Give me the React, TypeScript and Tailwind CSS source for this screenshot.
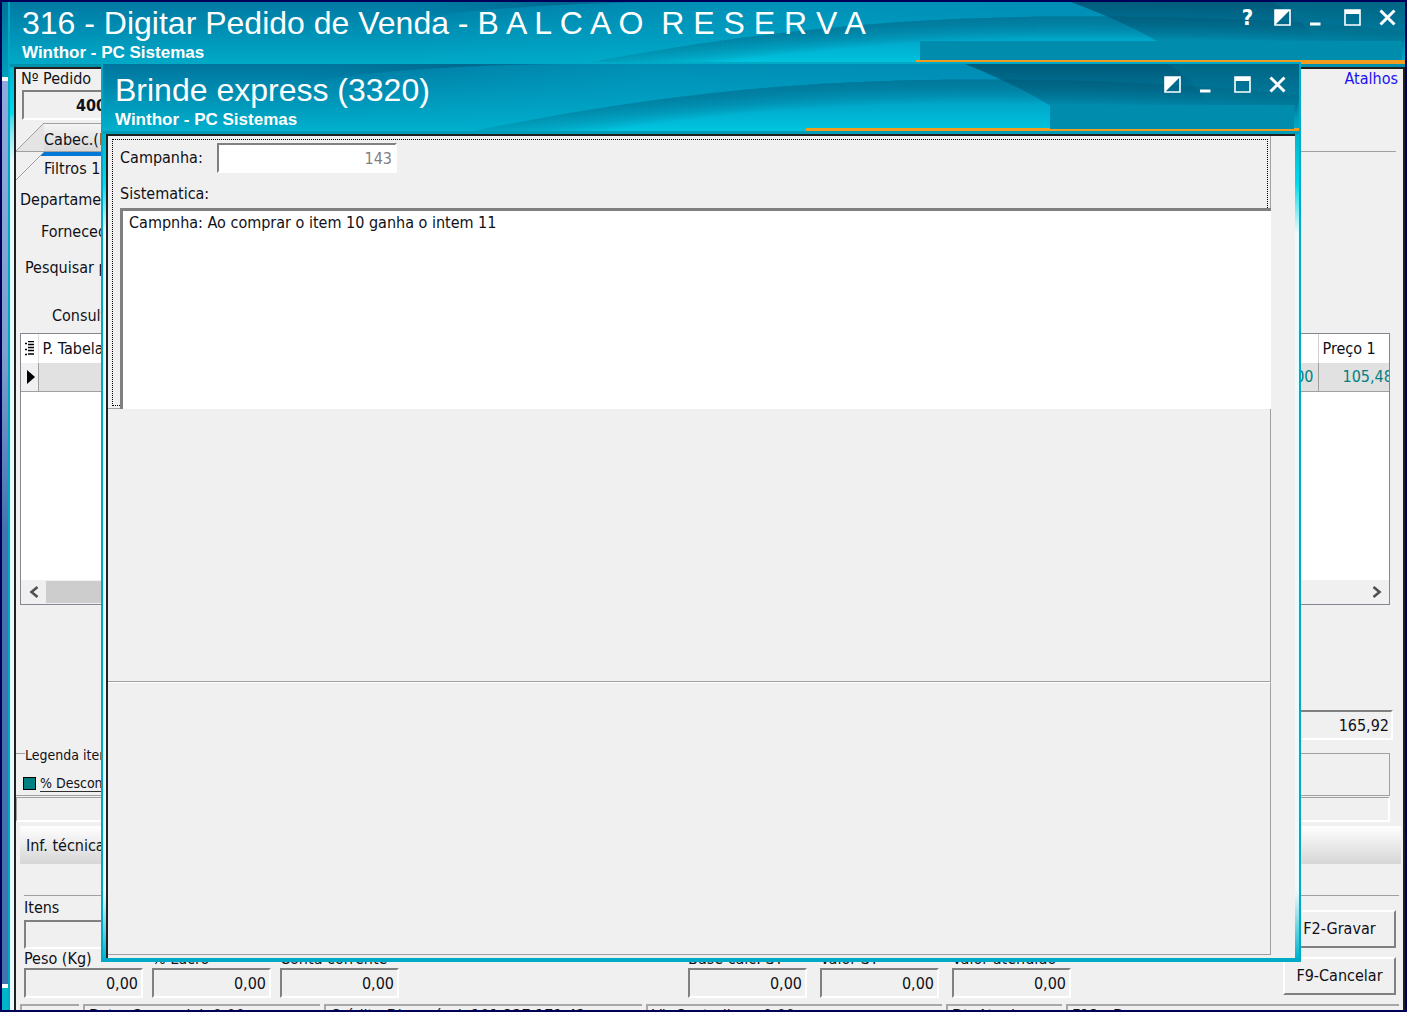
import React from "react";

const sunken =
  "border-2 border-t-[#808080] border-l-[#808080] border-b-white border-r-white rounded-none outline-none";

const wave = "M165 70C300 42 450 18 640 16C760 15 880 18 1000 32V110H165Z";
const shade = [2, 5, 8, 11, 14, 17, 20, 23, 26, 29, 32, 35, 38, 41, 44, 47];

function TitleArt({ id }: { id: string }) {
  return (
    <svg
      className="absolute right-0 top-0 h-full w-[1000px]"
      viewBox="0 0 1000 68"
      preserveAspectRatio="none"
      aria-hidden="true"
    >
      <defs>
        <clipPath id={`${id}-clip`}>
          <path d={wave} />
        </clipPath>
        <linearGradient id={`${id}-wave`} gradientUnits="userSpaceOnUse" x1="0" y1="14" x2="0" y2="66">
          <stop offset="0" stopColor="#0090b4" />
          <stop offset="0.5" stopColor="#00a6c8" />
          <stop offset="1" stopColor="#00c3de" />
        </linearGradient>
        <linearGradient id={`${id}-edge`} gradientUnits="userSpaceOnUse" x1="165" y1="0" x2="1000" y2="0">
          <stop offset="0" stopColor="#006a8c" stopOpacity="0.03" />
          <stop offset="0.3" stopColor="#006a8c" stopOpacity="0.06" />
          <stop offset="1" stopColor="#006a8c" stopOpacity="0.07" />
        </linearGradient>
        <linearGradient id={`${id}-top`} x1="0" y1="0" x2="1" y2="0">
          <stop offset="0" stopColor="#006289" stopOpacity="0" />
          <stop offset="0.6" stopColor="#006289" stopOpacity="0.8" />
          <stop offset="1" stopColor="#006289" stopOpacity="0.3" />
        </linearGradient>
        <linearGradient id={`${id}-fade`} x1="0" y1="0" x2="0" y2="1">
          <stop offset="0" stopColor="#004a66" stopOpacity="0.75" />
          <stop offset="0.6" stopColor="#005f80" stopOpacity="0.4" />
          <stop offset="1" stopColor="#0090b0" stopOpacity="0.1" />
        </linearGradient>
        <linearGradient id={`${id}-glow`} x1="0" y1="0" x2="1" y2="0">
          <stop offset="0" stopColor="#00b4d4" stopOpacity="0" />
          <stop offset="0.35" stopColor="#00a8cc" stopOpacity="0.5" />
          <stop offset="1" stopColor="#0088b4" stopOpacity="0.8" />
        </linearGradient>
      </defs>
      <path d="M0 0H1000V68H0Z" fill={`url(#${id}-glow)`} />
      <path d="M270 0C180 1 80 5 0 20V0Z" fill={`url(#${id}-top)`} />
      <path d={wave} fill={`url(#${id}-wave)`} />
      <g clipPath={`url(#${id}-clip)`} fill="none" stroke={`url(#${id}-edge)`}>
        {shade.map((width) => (
          <path key={width} d="M165 70C300 42 450 18 640 16C760 15 880 18 1000 32" strokeWidth={width} />
        ))}
      </g>
      <path d="M666 0C700 14 740 32 790 68H1000V0Z" fill={`url(#${id}-fade)`} />
      <path d="M868 0C890 14 905 28 925 68H1000V0Z" fill="#00829f" fillOpacity="0.3" />
    </svg>
  );
}

function WindowButtons({ help = false }: { help?: boolean }) {
  const button = "flex h-6 w-[35px] items-center justify-center text-white";
  return (
    <div className="relative flex h-6">
      {help && (
        <button aria-label="Ajuda" className="flex h-6 w-[35px] items-center justify-center text-[22px] font-bold text-white">
          ?
        </button>
      )}
      <button aria-label="Alternar" className={button}>
        <svg width="17" height="17" viewBox="0 0 17 17">
          <path d="M1 1H16V16H1Z" fill="none" stroke="white" strokeWidth="1.6" />
          <path d="M1 1H16L1 16Z" fill="white" />
        </svg>
      </button>
      <button aria-label="Minimizar" className={button}>
        <svg width="17" height="17" viewBox="0 0 17 17">
          <path d="M1 13.5H11.5V16.5H1Z" fill="white" />
        </svg>
      </button>
      <button aria-label="Maximizar" className={button}>
        <svg width="17" height="17" viewBox="0 0 17 17">
          <path d="M1 1H16V16H1Z" fill="none" stroke="white" strokeWidth="1.6" />
          <path d="M1 1H16V5H1Z" fill="white" />
        </svg>
      </button>
      <button aria-label="Fechar" className={button}>
        <svg width="17" height="17" viewBox="0 0 17 17">
          <path d="M1.5 1.5L15.5 15.5M15.5 1.5L1.5 15.5" stroke="white" strokeWidth="3" />
        </svg>
      </button>
    </div>
  );
}

function TitleText({ title }: { title: React.ReactNode }) {
  return (
    <div className="relative whitespace-pre font-['Liberation_Sans',sans-serif] text-white">
      <h1 className="text-[32px] leading-9">{title}</h1>
      <p className="text-[17px] font-bold leading-6">Winthor - PC Sistemas</p>
    </div>
  );
}

function Tab({ label, active = false }: { label: string; active?: boolean }) {
  return (
    <div className="mr-[7px] flex border-b border-[#a0a0a0] last:border-b-0">
      <svg width="28" height="28" viewBox="0 0 28 28" className="shrink-0">
        <path d="M0 28L28 0V28Z" fill={active ? "#f0f0f0" : "#e4e4e4"} />
        {active && <path d="M24 4L28 0V4Z" fill="#0078d7" />}
        <path d="M0 28L28 0" stroke="#a0a0a0" />
      </svg>
      <button
        className={
          active
            ? "h-7 w-32 border-t-4 border-[#0078d7] pt-px text-left leading-6"
            : "h-7 w-32 border-t border-[#a0a0a0] bg-linear-to-b from-[#f4f4f4] to-[#d8d8d8] pt-1 text-left leading-6"
        }
      >
        {label}
      </button>
    </div>
  );
}

function ItemsGrid() {
  return (
    <div className="ml-1 mr-[13px] flex min-h-0 flex-1 flex-col border border-[#828790] bg-white">
      <table className="w-full table-fixed border-collapse">
        <thead>
          <tr className="h-[29px] text-left">
            <th className="w-[17px] border-r border-[#e0e0e0]">
              <svg width="10" height="15" viewBox="0 0 10 15" className="ml-1">
                <path
                  d="M0 2.5H2M0 8.5H2M0 13.5H2M3 .5H9M3 3.5H9M3 6.5H9M3 9.5H9M3 13H9"
                  stroke="black"
                  strokeWidth="1.5"
                />
              </svg>
            </th>
            <th className="w-32 pl-1 font-normal">P. Tabela</th>
            <th></th>
            <th className="w-20"></th>
            <th className="w-[71px] border-l border-[#d0d0d0] pl-1 font-normal">Preço 1</th>
          </tr>
        </thead>
        <tbody>
          <tr className="h-7 border-b border-[#a0a0a0] bg-[#e1e1e1] text-[#008080]">
            <td className="border-r border-[#a0a0a0] bg-[#f0f0f0]">
              <svg width="9" height="14" viewBox="0 0 9 14" className="ml-[6px]">
                <path d="M0 0L8 7L0 14Z" fill="black" />
              </svg>
            </td>
            <td></td>
            <td></td>
            <td className="pr-1 text-right">0,00</td>
            <td className="overflow-hidden whitespace-nowrap border-l border-[#a0a0a0] pl-6">105,48</td>
          </tr>
        </tbody>
      </table>
      <div className="mt-auto flex h-6 items-center bg-[#f0f0f0]">
        <button aria-label="Anterior" className="flex w-[25px] justify-center">
          <svg width="10" height="12" viewBox="0 0 10 12">
            <path d="M8.5 1L2.5 6L8.5 11" fill="none" stroke="#505050" strokeWidth="2.6" />
          </svg>
        </button>
        <div className="mb-px h-[22px] w-1/2 bg-[#cdcdcd]"></div>
        <button aria-label="Próximo" className="ml-auto flex w-[25px] justify-center">
          <svg width="10" height="12" viewBox="0 0 10 12">
            <path d="M1.5 1L7.5 6L1.5 11" fill="none" stroke="#505050" strokeWidth="2.6" />
          </svg>
        </button>
      </div>
    </div>
  );
}

function TotalField({ label }: { label: string }) {
  return (
    <label className="w-[119px] leading-5">
      <span className="block h-[19px] whitespace-nowrap">{label}</span>
      <input readOnly value="0,00" className={`block h-[30px] w-full bg-[#f0f0f0] pr-[3px] text-right ${sunken}`} />
    </label>
  );
}

function StatusCell({ className, children }: { className: string; children?: React.ReactNode }) {
  return (
    <div className={`whitespace-nowrap border-l-2 border-t-2 border-[#a8a8a8] pl-1 leading-5 ${className}`}>
      {children}
    </div>
  );
}

function OrderForm() {
  return (
    <div className="flex min-h-0 flex-1 flex-col overflow-hidden bg-[#f0f0f0]">
      <div className="flex h-[21px] justify-between pl-[5px] pr-[5px] leading-5">
        <label htmlFor="pedido">Nº Pedido</label>
        <a href="#" className="text-[#1a10f5]">Atalhos</a>
      </div>
      <input
        id="pedido"
        readOnly
        value="40012"
        className={`mb-[3px] ml-[6px] h-[30px] w-40 bg-[#f0f0f0] pl-[52px] font-bold ${sunken}`}
      />
      <div className="mb-1">
        <Tab label="Cabec.(F5)" />
        <Tab label="Filtros 1" active />
      </div>
      <div className="flex flex-col whitespace-nowrap leading-8">
        <span className="pl-1">Departamento:</span>
        <span className="pl-[25px]">Fornecedor:</span>
        <span className="pl-[9px] pt-1">Pesquisar por:</span>
        <span className="mb-px pl-9 pt-4">Consulta:</span>
      </div>
      <ItemsGrid />
      <input
        readOnly
        aria-label="Total"
        value="165,92"
        className={`ml-auto mr-[10px] mt-[105px] h-[30px] w-40 shrink-0 bg-[#f0f0f0] pr-[2px] text-right ${sunken}`}
      />
      <fieldset className="mr-[13px] mt-[3px] h-[53px] shrink-0 border border-l-0 border-[#a0a0a0]">
        <legend className="ml-[9px] pt-1 text-sm leading-4">Legenda itens</legend>
        <div className="flex items-center gap-1 pl-[7px] pt-3 text-sm">
          <span className="h-[13px] w-[13px] border border-black bg-[#008080]"></span>
          <a href="#" className="border-b border-[#303030] leading-4">% Desconto</a>
        </div>
      </fieldset>
      <div className="mr-[13px] mt-px h-[25px] shrink-0 border border-b-2 border-r-2 border-[#a0a0a0] border-b-white border-r-white"></div>
      <div className="ml-1 mr-[2px] mt-1 flex h-[38px] shrink-0 items-center bg-linear-to-b from-white to-[#d6d6d6] pl-[6px] pt-[2px]">
        <button>Inf. técnicas</button>
      </div>
      <div className="ml-2 mr-1 mt-[31px] flex justify-between border-t border-[#a0a0a0]">
        <div className="flex-1">
          <label className="block w-40 leading-6">
            Itens
            <input readOnly className={`block h-[29px] w-full bg-[#f0f0f0] ${sunken}`} />
          </label>
          <div className="flex">
            <div className="flex gap-[9px]">
              <TotalField label="Peso (Kg)" />
              <TotalField label="% Lucro" />
              <TotalField label="Conta corrente" />
            </div>
            <div className="ml-[289px] flex gap-[13px]">
              <TotalField label="Base calc. ST" />
              <TotalField label="Valor ST" />
              <TotalField label="Valor atendido" />
            </div>
          </div>
        </div>
        <div className="mr-[3px] flex w-[113px] flex-col gap-[9px] pt-[14px]">
          <button className="h-[38px] border-2 border-[#808080] border-l-white border-t-white">
            F2-Gravar
          </button>
          <button className="h-[38px] border-2 border-[#808080] border-l-white border-t-white">
            F9-Cancelar
          </button>
        </div>
      </div>
      <div className="ml-1 mr-1 mt-[6px] flex h-[6px] shrink-0 gap-1 overflow-hidden">
        <StatusCell className="w-[59px]" />
        <StatusCell className="w-[237px]">Dcto. Comercial: 0,00</StatusCell>
        <StatusCell className="w-[318px]">Crédito Disponível: 101.237.171,42</StatusCell>
        <StatusCell className="w-[296px]">Vl. Conta-livre: 0,00</StatusCell>
        <StatusCell className="w-[116px]">Dt. Atual:</StatusCell>
        <StatusCell className="flex-1">F12 - D</StatusCell>
      </div>
    </div>
  );
}

function GiftDialog() {
  return (
    <section
      role="dialog"
      aria-label="Brinde express (3320)"
      className="absolute bottom-12 left-[99px] right-[104px] top-[60px] flex flex-col border-b-4 border-l-2 border-r-2 border-t-2 border-[#00aac6] bg-white"
    >
      <header className="relative flex h-[70px] shrink-0 justify-between overflow-hidden border-b-3 border-[#009cb8] bg-linear-to-b from-[#00759e] to-[#00b0cd] pl-3">
        <TitleArt id="dialog" />
        <div className="pt-2">
          <TitleText title="Brinde express (3320)" />
        </div>
        <div className="pr-1 pt-2">
          <WindowButtons />
        </div>
        <div className="absolute bottom-0 right-0 h-[3px] w-[493px] bg-[#f29c1f]"></div>
        <div className="absolute bottom-[2px] right-[5px] h-6 w-[244px] bg-[#008cad]"></div>
      </header>
      <div className="flex min-h-0 flex-1 bg-[linear-gradient(to_bottom,#00b4ce,#00dcec_6%,#e8fbfd_12%,#e8fbfd_92%,#00b4ce)] pl-[3px] pr-1">
        <div className="flex flex-1 flex-col border-l-2 border-t-2 border-[#202020] bg-[#f0f0f0] pb-[3px] pr-6">
          <div className="h-[273px] border-b border-r border-[#a0a0a0] pb-[2px] pl-1 pr-[2px] pt-[3px]">
            <div className="flex h-full flex-col border border-dotted border-black pl-[7px]">
              <div className="flex items-center pt-[3px]">
                <label htmlFor="campanha" className="w-[97px]">Campanha:</label>
                <input
                  id="campanha"
                  readOnly
                  value="143"
                  className={`h-[30px] w-[180px] bg-white pr-[3px] text-right text-[#808080] ${sunken}`}
                />
              </div>
              <label htmlFor="sistematica" className="pb-[2px] pt-[9px] leading-6">Sistematica:</label>
              <textarea
                id="sistematica"
                readOnly
                value="Campnha: Ao comprar o item 10 ganha o intem 11"
                className="-mb-[4px] -mr-1 min-h-0 flex-1 resize-none border-l-3 border-t-3 border-[#808080] bg-white pl-[6px] leading-6 outline-none"
              ></textarea>
            </div>
          </div>
          <div className="flex-1 border-b border-r border-[#a0a0a0]"></div>
          <div className="flex-1 border-b border-r border-[#a0a0a0] border-t border-t-white"></div>
        </div>
      </div>
    </section>
  );
}

export default function App() {
  return (
    <main className="relative flex h-screen overflow-hidden border-2 border-[#000058] bg-[#000058] font-['DejaVu_Sans_Condensed','DejaVu_Sans',sans-serif] text-base text-[#101018]">
      <div className="flex w-[6px] flex-col">
        <div className="h-[75px] bg-linear-to-b from-[#007398] to-[#009fbc]"></div>
        <div className="flex-1 border-y-4 border-white bg-linear-to-b from-[#8faadc] via-[#7e9fd0] via-30% to-[#4472ac] to-50%"></div>
        <div className="h-[22px] bg-[#00b4cc]"></div>
      </div>
      <section className="flex min-w-0 flex-1 flex-col border-l-2 border-[#00aac6]">
        <header className="relative flex h-[65px] shrink-0 justify-between overflow-hidden border-b-3 border-[#0090ac] bg-linear-to-b from-[#0079a3] to-[#00aac8] pl-3">
          <TitleArt id="main" />
          <div className="pt-[3px]">
            <TitleText title="316 - Digitar Pedido de Venda - B A L C A O  R E S E R V A" />
          </div>
          <div className="pt-[3px]">
            <WindowButtons help />
          </div>
          <div className="absolute bottom-0 right-0 h-1 w-[489px] bg-[#f29c1f]"></div>
          <div className="absolute bottom-1 right-[3px] h-[19px] w-[482px] bg-[#008cad]"></div>
        </header>
        <div className="flex min-h-0 flex-1 bg-linear-to-b from-[#00b4ce] via-[#00dcec] via-5% to-[#e8fbfd] to-10% pl-1">
          <div className="flex min-w-0 flex-1 flex-col border-l-2 border-r-2 border-t-2 border-[#202020]">
            <OrderForm />
          </div>
        </div>
      </section>
      <GiftDialog />
    </main>
  );
}
